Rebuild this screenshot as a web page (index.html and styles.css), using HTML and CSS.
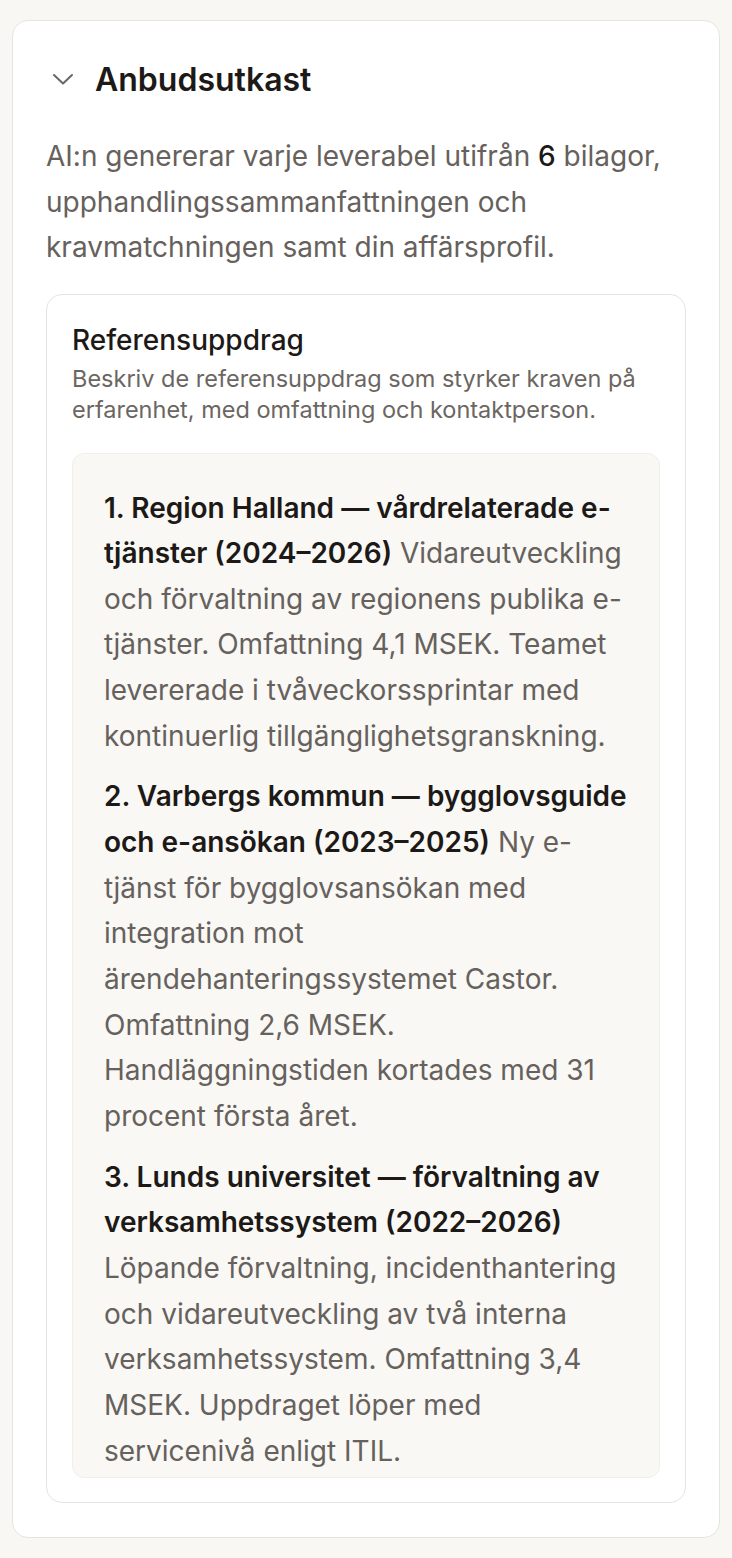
FILE: index.html
```html
<!DOCTYPE html>
<html lang="sv">
  <head>
    <meta charset="UTF-8" />
    <meta name="viewport" content="width=device-width, initial-scale=1.0" />
    <title>Anbudsutkast</title>
    <link rel="stylesheet" href="styles.css">
  </head>
  <body>
    <section class="panel">
      <div class="panel-head">
        <svg class="chevron" width="22" height="12" viewBox="0 0 22 12" fill="none" stroke="currentColor" stroke-width="2" stroke-linecap="round" stroke-linejoin="round">
          <path d="M2 2l9 8.5 9-8.5" />
        </svg>
        <h2>Anbudsutkast</h2>
      </div>
      <p class="intro">
        AI:n genererar varje leverabel utifrån <strong>6</strong> bilagor,
        upphandlingssammanfattningen och kravmatchningen samt din affärsprofil.
      </p>

      <div class="section">
        <h3>Referensuppdrag</h3>
        <p class="hint">
          Beskriv de referensuppdrag som styrker kraven på erfarenhet, med
          omfattning och kontaktperson.
        </p>
        <div class="draft">
          <p>
            <b>1. Region Halland — vårdrelaterade e-tjänster (2024–2026)</b>
            Vidareutveckling och förvaltning av regionens publika e-tjänster.
            Omfattning 4,1 MSEK. Teamet levererade i tvåveckorssprintar med
            kontinuerlig tillgänglighetsgranskning.
          </p>
          <p>
            <b>2. Varbergs kommun — bygglovsguide och e-ansökan (2023–2025)</b>
            Ny e-tjänst för bygglovsansökan med integration mot
            ärendehanteringssystemet Castor. Omfattning 2,6 MSEK.
            Handläggningstiden kortades med 31 procent första året.
          </p>
          <p>
            <b>3. Lunds universitet — förvaltning av verksamhetssystem (2022–2026)</b>
            Löpande förvaltning, incidenthantering och vidareutveckling av två
            interna verksamhetssystem. Omfattning 3,4 MSEK. Uppdraget löper med
            servicenivå enligt ITIL.
          </p>
        </div>
      </div>
    </section>
  </body>
</html>
```

FILE: styles.css
```css
body {
  font-family: Inter, "Noto Sans", sans-serif;
  background-color: #f8f7f3;
  margin: 0;
  padding: 20px 12px 20px 12px;
  color: #1c1917;
}

.panel {
  background-color: #fff;
  border: 1px solid #e6e4dd;
  border-radius: 16px;
  padding: 34px 33px 34px 33px;
}

.panel-head {
  display: flex;
  align-items: center;
  gap: 21px;
  height: 48px;
}

.chevron {
  color: #6b6661;
  margin-left: 6px;
}

h2 {
  margin: 0;
  font-size: 32px;
  font-weight: 600;
  color: #1c1917;
}

.intro {
  margin: 31px 0 23px 0;
  font-size: 28px;
  line-height: 45.5px;
  color: #66615c;
}

.intro strong {
  font-weight: 500;
  color: #1c1917;
}

.section {
  border: 1px solid #e6e4dd;
  border-radius: 16px;
  padding: 25px 25px 24px 25px;
}

h3 {
  margin: 0;
  font-size: 28px;
  font-weight: 500;
  line-height: 40px;
  color: #1c1917;
}

.hint {
  margin: 3px 0 28px 0;
  font-size: 23.5px;
  line-height: 31px;
  color: #6b6661;
}

.draft {
  background-color: #f9f8f5;
  border: 1px solid #f1efea;
  border-radius: 12px;
  padding: 32px 31px 3px 31px;
}

.draft p {
  margin: 0 0 15px 0;
  font-size: 28px;
  line-height: 45.65px;
  color: #66615c;
}

.draft p:last-child {
  margin-bottom: 0;
}

.draft b {
  font-weight: 600;
  color: #1c1917;
}
```
